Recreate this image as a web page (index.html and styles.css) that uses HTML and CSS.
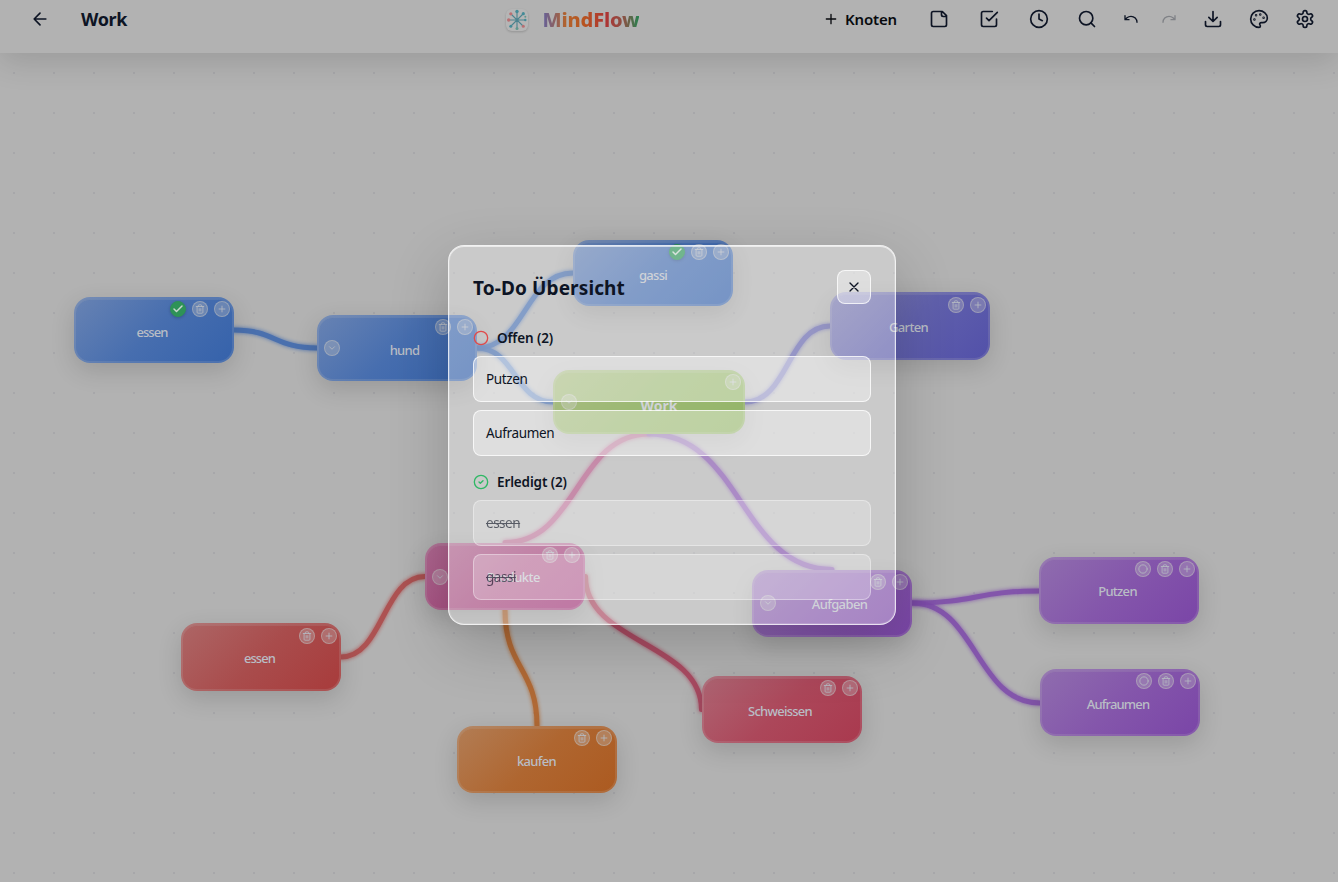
FILE: index.html
```html
<!DOCTYPE html>
<html lang="de">
<head>
<meta charset="utf-8">
<title>MindFlow</title>
<link rel="stylesheet" href="styles.css">
</head>
<body>
<svg class="defs" aria-hidden="true">
  <symbol id="plus" viewBox="0 0 24 24"><path d="M5 12h14M12 5v14"/></symbol>
  <symbol id="trash" viewBox="0 0 24 24"><path d="M3 6h18M19 6v14a2 2 0 0 1-2 2H7a2 2 0 0 1-2-2V6M8 6V4a2 2 0 0 1 2-2h4a2 2 0 0 1 2 2v2M10 11v6M14 11v6"/></symbol>
  <symbol id="check" viewBox="0 0 24 24"><path d="M20 6 9 17l-5-5"/></symbol>
  <symbol id="circle" viewBox="0 0 24 24"><circle cx="12" cy="12" r="10"/></symbol>
  <symbol id="down" viewBox="0 0 24 24"><path d="m6 9 6 6 6-6"/></symbol>
</svg>
<div class="app">
  <header class="topbar">
    <div class="left">
      <svg class="icon" viewBox="0 0 24 24"><path d="m12 19-7-7 7-7M19 12H5"/></svg>
      <h1 class="map-title">Work</h1>
    </div>
    <div class="brand">
      <svg class="logo" viewBox="0 0 24 24">
        <rect class="tile" x="1" y="1" width="22" height="22" rx="6"/>
        <path class="spokes" d="M12 12V3.500M12 12V20.500M12 12H4M12 12H20M12 12 6 6M12 12 18 6M12 12 6 18M12 12 18 18"/>
        <g class="teal"><circle cx="12" cy="3.500" r="1.700"/><circle cx="18.300" cy="5.700" r="1.600"/><circle cx="5.800" cy="18.200" r="1.500"/><circle cx="20.300" cy="12" r="1.200"/></g>
        <g class="coral"><circle cx="5.800" cy="5.800" r="1.600"/><circle cx="3.700" cy="12" r="1.700"/><circle cx="18.300" cy="18.200" r="1.500"/></g>
        <g class="mint"><circle cx="12" cy="20.500" r="1.500"/><circle cx="20.300" cy="8.800" r="1"/></g>
      </svg>
      <span class="brand-name">MindFlow</span>
    </div>
    <nav class="tools">
      <button class="add"><svg class="icon small" viewBox="0 0 24 24"><use href="#plus"/></svg><span>Knoten</span></button>
      <svg class="icon note" viewBox="0 0 24 24"><path d="M16 3H5a2 2 0 0 0-2 2v14a2 2 0 0 0 2 2h14a2 2 0 0 0 2-2V8ZM15 3v4a2 2 0 0 0 2 2h4"/></svg>
      <svg class="icon wide" viewBox="0 0 24 24"><path d="m9 11 3 3L22 4M21 12v7a2 2 0 0 1-2 2H5a2 2 0 0 1-2-2V5a2 2 0 0 1 2-2h11"/></svg>
      <svg class="icon wide" viewBox="0 0 24 24"><circle cx="12" cy="12" r="10"/><path d="M12 6v6l4 2"/></svg>
      <svg class="icon search" viewBox="0 0 24 24"><circle cx="11" cy="11" r="8"/><path d="m21 21-4.300-4.300"/></svg>
      <svg class="icon small undo" viewBox="0 0 24 24"><path d="M3 7v6h6M21 17a9 9 0 0 0-9-9 9 9 0 0 0-6 2.300L3 13"/></svg>
      <svg class="icon small redo" viewBox="0 0 24 24"><path d="M21 7v6h-6M3 17a9 9 0 0 1 9-9 9 9 0 0 1 6 2.300l3 2.700"/></svg>
      <svg class="icon" viewBox="0 0 24 24"><path d="M21 15v4a2 2 0 0 1-2 2H5a2 2 0 0 1-2-2v-4M7 10l5 5 5-5M12 15V3"/></svg>
      <svg class="icon" viewBox="0 0 24 24"><circle cx="13.500" cy="6.500" r=".5"/><circle cx="17.500" cy="10.500" r=".5"/><circle cx="8.500" cy="7.500" r=".5"/><circle cx="6.500" cy="12.500" r=".5"/><path d="M12 2C6.500 2 2 6.500 2 12s4.500 10 10 10c.926 0 1.648-.746 1.648-1.688 0-.437-.18-.835-.437-1.125-.29-.289-.438-.652-.438-1.125a1.640 1.640 0 0 1 1.668-1.668h1.996c3.051 0 5.555-2.503 5.555-5.554C21.965 6.012 17.461 2 12 2z"/></svg>
      <svg class="icon" viewBox="0 0 24 24"><path d="M12.220 2h-.44a2 2 0 0 0-2 2v.18a2 2 0 0 1-1 1.730l-.43.25a2 2 0 0 1-2 0l-.15-.08a2 2 0 0 0-2.730.73l-.22.38a2 2 0 0 0 .73 2.730l.15.1a2 2 0 0 1 1 1.720v.51a2 2 0 0 1-1 1.740l-.15.09a2 2 0 0 0-.73 2.730l.22.38a2 2 0 0 0 2.730.73l.15-.08a2 2 0 0 1 2 0l.43.25a2 2 0 0 1 1 1.730V20a2 2 0 0 0 2 2h.44a2 2 0 0 0 2-2v-.18a2 2 0 0 1 1-1.730l.43-.25a2 2 0 0 1 2 0l.15.08a2 2 0 0 0 2.730-.73l.22-.39a2 2 0 0 0-.73-2.730l-.15-.08a2 2 0 0 1-1-1.740v-.5a2 2 0 0 1 1-1.740l.15-.09a2 2 0 0 0 .73-2.730l-.22-.38a2 2 0 0 0-2.730-.73l-.15.08a2 2 0 0 1-2 0l-.43-.25a2 2 0 0 1-1-1.730V4a2 2 0 0 0-2-2z"/><circle cx="12" cy="12" r="3"/></svg>
    </nav>
  </header>

  <main class="canvas">
    <svg class="edges" viewBox="0 0 1338 882">
      <path class="e-blue" d="M234 330C275 330 275 348 317 348"/>
      <path class="e-blue" d="M477 348C525 348 525 273 573 273"/>
      <path class="e-blue" d="M477 348C515 348 515 402 553 402"/>
      <path class="e-indigo" d="M745 402C788 402 788 326 830 326"/>
      <path class="e-pink" d="M649 434C577 434 577 542.500 505 542.500"/>
      <path class="e-purple" d="M649 434C741 434 741 569.500 832 569.500"/>
      <path class="e-red" d="M425 576.500C383 576.500 383 657 341 657"/>
      <path class="e-orange" d="M505 610C505 668 537 668 537 726"/>
      <path class="e-rose" d="M585.500 576.500C585.500 643 701.500 643 701.500 709.500"/>
      <path class="e-purple" d="M912 603C976 603 976 591 1039 591"/>
      <path class="e-purple" d="M912 603C976 603 976 703 1040 703"/>
    </svg>

    <div class="node blue n-essen"><span class="label">essen</span><div class="acts"><i class="act done"><svg><use href="#check"/></svg></i><i class="act"><svg><use href="#trash"/></svg></i><i class="act"><svg><use href="#plus"/></svg></i></div></div>
    <div class="node blue n-hund"><i class="act fold"><svg><use href="#down"/></svg></i><span class="label">hund</span><div class="acts"><i class="act"><svg><use href="#trash"/></svg></i><i class="act"><svg><use href="#plus"/></svg></i></div></div>
    <div class="node blue n-gassi"><span class="label">gassi</span><div class="acts"><i class="act done"><svg><use href="#check"/></svg></i><i class="act"><svg><use href="#trash"/></svg></i><i class="act"><svg><use href="#plus"/></svg></i></div></div>
    <div class="node indigo n-garten"><span class="label">Garten</span><div class="acts"><i class="act"><svg><use href="#trash"/></svg></i><i class="act"><svg><use href="#plus"/></svg></i></div></div>
    <div class="node green n-work"><i class="act fold"><svg><use href="#down"/></svg></i><span class="label">Work</span><div class="acts"><i class="act"><svg><use href="#plus"/></svg></i></div></div>
    <div class="node pink n-produkte"><i class="act fold"><svg><use href="#down"/></svg></i><span class="label">Produkte</span><div class="acts"><i class="act"><svg><use href="#trash"/></svg></i><i class="act"><svg><use href="#plus"/></svg></i></div></div>
    <div class="node purple n-aufgaben"><i class="act fold"><svg><use href="#down"/></svg></i><span class="label">Aufgaben</span><div class="acts"><i class="act"><svg><use href="#trash"/></svg></i><i class="act"><svg><use href="#plus"/></svg></i></div></div>
    <div class="node purple n-putzen"><span class="label">Putzen</span><div class="acts"><i class="act"><svg><use href="#circle"/></svg></i><i class="act"><svg><use href="#trash"/></svg></i><i class="act"><svg><use href="#plus"/></svg></i></div></div>
    <div class="node purple n-aufraumen"><span class="label">Aufraumen</span><div class="acts"><i class="act"><svg><use href="#circle"/></svg></i><i class="act"><svg><use href="#trash"/></svg></i><i class="act"><svg><use href="#plus"/></svg></i></div></div>
    <div class="node red n-essen2"><span class="label">essen</span><div class="acts"><i class="act"><svg><use href="#trash"/></svg></i><i class="act"><svg><use href="#plus"/></svg></i></div></div>
    <div class="node orange n-kaufen"><span class="label">kaufen</span><div class="acts"><i class="act"><svg><use href="#trash"/></svg></i><i class="act"><svg><use href="#plus"/></svg></i></div></div>
    <div class="node rose n-schweissen"><span class="label">Schweissen</span><div class="acts"><i class="act"><svg><use href="#trash"/></svg></i><i class="act"><svg><use href="#plus"/></svg></i></div></div>
  </main>

  <section class="dialog" role="dialog">
    <div class="dialog-head">
      <h2>To-Do Übersicht</h2>
      <button class="close"><svg class="icon small" viewBox="0 0 24 24"><path d="M18 6 6 18M6 6l12 12"/></svg></button>
    </div>
    <h3 class="group open"><svg viewBox="0 0 24 24"><circle cx="12" cy="12" r="10"/></svg><span>Offen (2)</span></h3>
    <ul class="todos">
      <li>Putzen</li>
      <li>Aufraumen</li>
    </ul>
    <h3 class="group finished"><svg viewBox="0 0 24 24"><circle cx="12" cy="12" r="10"/><path d="m9 12 2 2 4-4"/></svg><span>Erledigt (2)</span></h3>
    <ul class="todos finished">
      <li>essen</li>
      <li>gassi</li>
    </ul>
  </section>
</div>
</body>
</html>
```

FILE: styles.css
```css
* { box-sizing: border-box; }
body { margin: 0; background: #b2b2b2; font-family: "Noto Sans", "Open Sans", sans-serif; color: #0d1424; }
button { font: inherit; color: inherit; background: none; border: 0; padding: 0; }
h1, h2, h3, ul { margin: 0; padding: 0; list-style: none; }
svg { fill: none; stroke: currentColor; stroke-width: 2; stroke-linecap: round; stroke-linejoin: round; }
.defs { position: absolute; width: 0; height: 0; }
.app { position: relative; width: 1338px; height: 882px; overflow: hidden; }

.topbar { position: relative; z-index: 2; display: grid; grid-template-columns: 1fr auto 1fr; align-items: center; height: 53px; padding: 0 23px 15px 30px; background: #b2b2b2; box-shadow: 0 8px 32px rgba(0, 0, 0, .14); }
.left { display: flex; align-items: center; gap: 31px; }
.map-title { font-size: 18px; line-height: 24px; font-weight: 700; letter-spacing: -.38px; }
.icon { display: block; flex: none; width: 20px; height: 20px; }
.icon.small { width: 16px; height: 16px; }
.brand { display: flex; align-items: center; gap: 14px; margin-left: -168px; padding-top: 2px; }
.logo { width: 24px; height: 24px; stroke: none; opacity: .9; filter: drop-shadow(0 1px 1px rgba(0, 0, 0, .2)); }
.logo .tile { fill: #b6b6b6; }
.logo .spokes { stroke: #417f8c; stroke-width: 1.100; }
.logo .teal { fill: #388795; }
.logo .coral { fill: #b9686c; }
.logo .mint { fill: #58958a; }
.brand-name { position: relative; font-size: 20px; line-height: 24px; font-weight: 800; letter-spacing: -.14px; color: transparent; background: linear-gradient(90deg, #646099 0%, #b3622b 24%, #b8541f 42%, #ad3434 66%, #8b5144 84%, #25824f 100%); background-clip: text; -webkit-background-clip: text; }
.tools { display: flex; align-items: center; justify-content: flex-end; gap: 26px; }
.add { display: flex; align-items: center; gap: 6px; font-size: 15px; line-height: 20px; font-weight: 600; letter-spacing: -.16px; color: #080a0e; }
.note { margin-left: 6px; }
.wide { margin-left: 4px; }
.search { margin-left: 2px; }
.redo { margin-left: -4px; opacity: .3; }

.canvas { position: absolute; inset: 0; background: radial-gradient(circle, #a7a7aa 1px, transparent 1.300px) -6px 13px / 40px 40px; }
.edges { position: absolute; inset: 0; width: 1338px; height: 882px; stroke-width: 5; }
.edges path { opacity: .9; filter: drop-shadow(0 0 2px currentColor); stroke: currentColor; }
.e-blue { color: #3f69ae; }
.e-indigo { color: #5c5cab; }
.e-pink { color: #ac4a7c; }
.e-purple { color: #7e4cab; }
.e-red { color: #ad4848; }
.e-orange { color: #b06228; }
.e-rose { color: #a9405a; }

.node { position: absolute; display: flex; align-items: center; justify-content: center; width: 160px; height: 67px; border-radius: 16px; border: 2px solid rgba(190, 190, 190, .16); background-origin: border-box; box-shadow: 0 8px 24px rgba(0, 0, 0, .14), inset 0 1px 0 rgba(190, 190, 190, .15); font-size: 13px; line-height: 18px; font-weight: 500; letter-spacing: -.7px; color: #b9bdc5; padding: 3px 3px 0 0; }
.blue { background-image: linear-gradient(135deg, #6883b3, #476eaf 50%, #3562ab); }
.indigo { background-image: linear-gradient(135deg, #7c7cae, #6060ac 50%, #5250a9); }
.green { background-image: linear-gradient(135deg, #809c48, #6c9830 50%, #629222); }
.pink { background-image: linear-gradient(135deg, #ae6890, #a54a7e 50%, #a2387a); }
.purple { background-image: linear-gradient(135deg, #8f6dae, #8456ab 50%, #7a45a7); }
.red { background-image: linear-gradient(135deg, #ad6666, #a94c4c 50%, #a83b3b); }
.orange { background-image: linear-gradient(135deg, #b27d55, #af6630 50%, #ac5a20); }
.rose { background-image: linear-gradient(135deg, #ae6573, #ac475a 50%, #a9394e); }
.n-essen { left: 74px; top: 297px; height: 66px; padding-right: 4px; letter-spacing: -.9px; }
.n-hund { left: 317px; top: 315px; height: 66px; padding-left: 18px; }
.n-gassi { left: 573px; top: 240px; height: 66px; padding-right: 0; }
.n-garten { left: 830px; top: 292px; height: 68px; padding-top: 2px; }
.n-work { left: 553px; top: 370px; width: 192px; height: 64px; padding: 7px 0 0 20px; font-size: 14px; font-weight: 700; letter-spacing: 0; }
.n-produkte { left: 425px; top: 543px; padding: 1px 3px 0 20px; letter-spacing: -.5px; }
.n-aufgaben { left: 752px; top: 570px; padding: 1px 3px 0 18px; letter-spacing: -.62px; }
.n-putzen { left: 1039px; top: 557px; padding-top: 1px; }
.n-aufraumen { left: 1040px; top: 669px; padding-right: 4px; letter-spacing: -.84px; }
.n-essen2 { left: 181px; top: 623px; height: 68px; padding-top: 2px; letter-spacing: -.9px; }
.n-kaufen { left: 457px; top: 726px; padding-right: 1px; }
.n-schweissen { left: 702px; top: 676px; padding-right: 4px; letter-spacing: -.74px; }
.acts { position: absolute; top: 2px; right: 2px; display: flex; gap: 6px; }
.n-produkte .acts, .n-kaufen .acts { right: 3px; }
.n-garten .acts, .n-essen2 .acts { top: 3px; }
.act { display: flex; align-items: center; justify-content: center; width: 16px; height: 16px; border: 1px solid rgba(190, 190, 190, .5); border-radius: 50%; background: rgba(190, 190, 190, .33); color: #b4b9c2; }
.act svg { flex: none; width: 10px; height: 10px; }
.act.done { background: #2e9257; border-color: #2e9257; color: #c8d6ce; box-shadow: 0 1px 3px rgba(0, 0, 0, .2); }
.act.done svg { width: 12px; height: 12px; stroke-width: 3; }
.act.fold { position: absolute; left: 5px; top: calc(50% - 8px); }
.n-work .fold, .n-aufgaben .fold { left: 6px; }
.n-aufgaben .fold { top: calc(50% - 9px); }

.dialog { position: absolute; z-index: 3; left: 448px; top: 245px; width: 448px; height: 380px; padding: 24px; border: 1px solid rgba(255, 255, 255, .75); border-radius: 16px; background: rgba(255, 255, 255, .32); box-shadow: 0 20px 60px rgba(0, 0, 0, .2), inset 0 1px 0 rgba(255, 255, 255, .55), inset 0 0 0 1px rgba(255, 255, 255, .15); }
.dialog-head { display: flex; align-items: center; justify-content: space-between; height: 34px; margin-bottom: 24px; }
.dialog-head h2 { font-size: 19px; line-height: 28px; font-weight: 700; letter-spacing: .12px; padding-top: 2px; }
.close { display: grid; place-items: center; width: 34px; height: 34px; border: 1px solid rgba(255, 255, 255, .75); border-radius: 8px; background: rgba(255, 255, 255, .38); }
.group { display: flex; align-items: center; gap: 8px; height: 20px; margin-bottom: 8px; font-size: 13.500px; line-height: 20px; font-weight: 600; letter-spacing: -.13px; }
.group svg { width: 16px; height: 16px; flex: none; }
.open svg { color: #e04a4a; }
.group.finished svg { color: #2fb865; }
.todos { display: grid; gap: 8px; margin-bottom: 16px; }
.todos li { display: flex; align-items: center; height: 46px; padding: 0 12px; border: 1px solid rgba(255, 255, 255, .75); border-radius: 8px; background: rgba(255, 255, 255, .38); font-size: 13.500px; line-height: 20px; letter-spacing: -.36px; }
.todos.finished li { opacity: .6; text-decoration: line-through; letter-spacing: -.48px; }
```
